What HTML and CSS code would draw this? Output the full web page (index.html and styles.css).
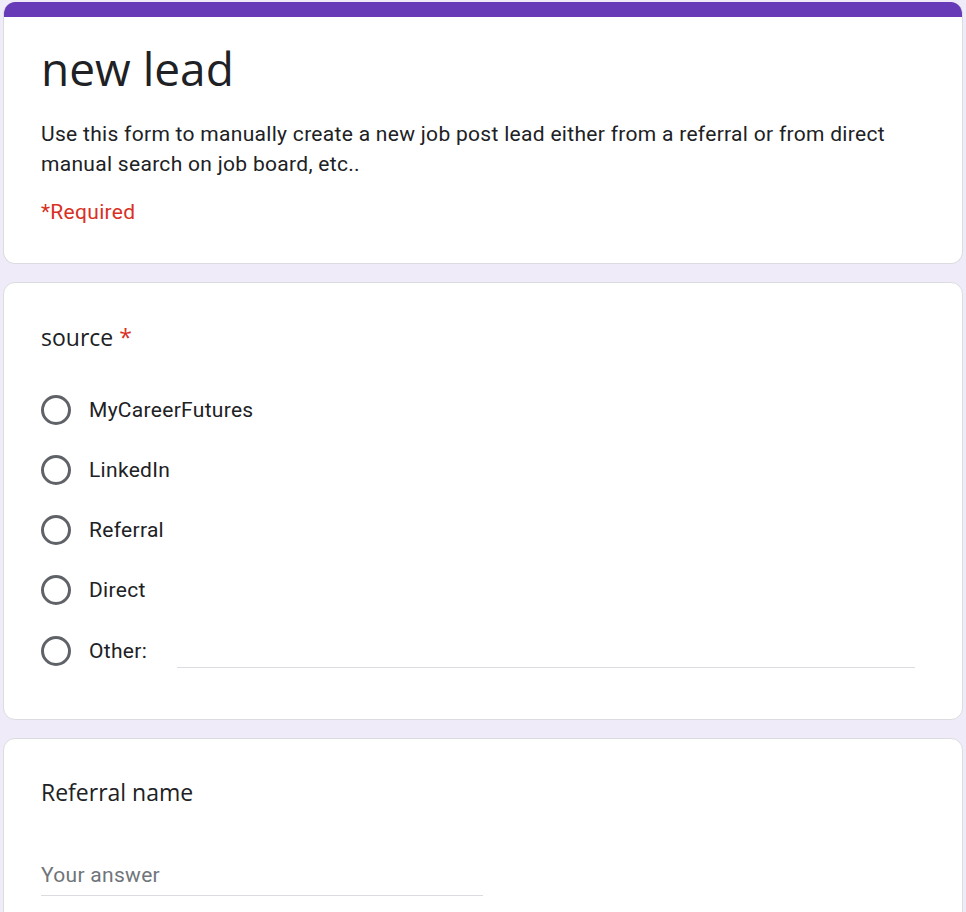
FILE: index.html
```html
<!DOCTYPE html>
<html lang="en">
<head>
<meta charset="utf-8">
<title>new lead</title>
<link rel="stylesheet" href="styles.css">
</head>
<body>
<div class="page">
  <div class="card header-card">
    <div class="accent"></div>
    <div class="header-body">
      <h1 class="form-title">new lead</h1>
      <p class="form-desc">Use this form to manually create a new job post lead either from a referral or from direct manual search on job board, etc..</p>
      <p class="required-note">*Required</p>
    </div>
  </div>

  <div class="card question-card">
    <div class="q-title">source <span class="star">*</span></div>
    <div class="options">
      <label class="option"><span class="radio"></span><span class="opt-label">MyCareerFutures</span></label>
      <label class="option"><span class="radio"></span><span class="opt-label">LinkedIn</span></label>
      <label class="option"><span class="radio"></span><span class="opt-label">Referral</span></label>
      <label class="option"><span class="radio"></span><span class="opt-label">Direct</span></label>
      <label class="option option-other"><span class="radio"></span><span class="opt-label">Other:</span><span class="other-input"></span></label>
    </div>
  </div>

  <div class="card question-card last-card">
    <div class="q-title">Referral name</div>
    <div class="answer"><span class="placeholder">Your answer</span></div>
  </div>
</div>
</body>
</html>
```

FILE: styles.css
```css
* { box-sizing: border-box; }

html, body {
  margin: 0;
  padding: 0;
  background: #f0ebf8;
}

body {
  font-family: Roboto, "Liberation Sans", sans-serif;
  color: #202124;
}

.page {
  padding: 2px 3px 0 3px;
  display: flex;
  flex-direction: column;
  gap: 18px;
}

.card {
  width: 960px;
  background: #ffffff;
  border: 1px solid #dadce0;
  border-radius: 12px;
}

.header-card {
  overflow: hidden;
  border-top: none;
}

.accent {
  height: 15px;
  background: #673ab7;
  margin: 0 -1px;
}

.header-body {
  padding: 21px 36px 36px 37px;
}

.form-title {
  margin: 0;
  font-family: "Open Sans", sans-serif;
  font-weight: 400;
  font-size: 46px;
  line-height: 60px;
  color: #202124;
}

.form-desc {
  margin: 21px 0 0 0;
  font-size: 21px;
  line-height: 30px;
  letter-spacing: 0.3px;
  color: #202124;
}

.required-note {
  margin: 18px 0 0 0;
  font-size: 21px;
  line-height: 30px;
  letter-spacing: 0.3px;
  color: #d93025;
}

.question-card {
  padding: 36px 36px 38px 37px;
}

.q-title {
  font-family: "Open Sans", sans-serif;
  font-size: 23px;
  line-height: 36px;
  color: #202124;
}

.star {
  color: #d93025;
}

.options {
  margin-top: 25px;
  display: flex;
  flex-direction: column;
}

.option {
  display: flex;
  align-items: center;
  height: 60px;
}

.option-other {
  height: 61px;
}

.radio {
  width: 30px;
  height: 30px;
  border: 3px solid #5f6368;
  border-radius: 50%;
  flex: 0 0 30px;
}

.opt-label {
  margin-left: 18px;
  font-size: 21px;
  line-height: 30px;
  letter-spacing: 0.3px;
  color: #202124;
}

.other-input {
  margin-left: 30px;
  margin-right: 11px;
  flex: 1;
  height: 33px;
  margin-top: 2px;
  border-bottom: 1px solid #dadce0;
}

.last-card {
  padding-top: 35px;
  height: 200px;
}

.answer {
  margin-top: 50px;
  width: 442px;
  border-bottom: 1px solid #dadce0;
  padding-bottom: 5px;
}

.placeholder {
  font-size: 21px;
  line-height: 30px;
  letter-spacing: 0.3px;
  color: #70757a;
}
```
